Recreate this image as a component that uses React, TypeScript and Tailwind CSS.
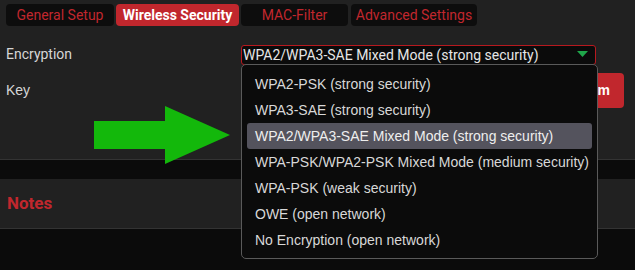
import React from 'react';

const tabs = ['General Setup', 'Wireless Security', 'MAC-Filter', 'Advanced Settings'];

const options = [
  'WPA2-PSK (strong security)',
  'WPA3-SAE (strong security)',
  'WPA2/WPA3-SAE Mixed Mode (strong security)',
  'WPA-PSK/WPA2-PSK Mixed Mode (medium security)',
  'WPA-PSK (weak security)',
  'OWE (open network)',
  'No Encryption (open network)',
];

const App: React.FC = () => {
  const selected = 2;

  return (
    <div className="relative w-[635px] h-[270px] overflow-hidden bg-[#0b0b0b] font-['Roboto',sans-serif]">
      {/* settings panel */}
      <div className="h-[160px] bg-[#212121] border-b border-[#333] pt-[4px] px-[6px]">
        <div className="flex gap-[2px]">
          {tabs.map((t, i) => (
            <div
              key={t}
              className={`h-[22px] rounded-[4px] flex items-center justify-center text-[14px] ${
                i === 1
                  ? 'w-[123px] bg-[#c1272d] text-white font-bold'
                  : 'bg-[#0d0d0d] text-[#c1272d]'
              } ${i === 0 ? 'w-[108px]' : ''} ${i === 2 ? 'w-[107px]' : ''} ${i === 3 ? 'w-[126px] ml-[1px]' : ''}`}
            >
              {t}
            </div>
          ))}
        </div>

        <div className="flex items-center mt-[18px]">
          <div className="w-[235px] text-[14px] text-[#d6d6d6]">Encryption</div>
          <div className="w-[355px] h-[20px] rounded-[3px] border border-[#b7191f] bg-[#0b0b0b] flex items-center justify-between pl-[1px] pr-[7px]">
            <span className="text-[14px] text-[#e6e6e6] leading-none">WPA2/WPA3-SAE Mixed Mode (strong security)</span>
            <svg width="11" height="7" viewBox="0 0 11 7">
              <polygon points="0,0 11,0 5.5,6" fill="#1fa64a" />
            </svg>
          </div>
        </div>

        <div className="flex items-center justify-between mt-[8px] pr-[5px]">
          <div className="text-[14px] text-[#d6d6d6] font-['Liberation_Sans',sans-serif]">Key</div>
          <button className="h-[35px] w-[90px] rounded-[4px] bg-[#c1272d] text-white font-bold text-[14px] text-right pr-[14px] font-['Liberation_Sans',sans-serif]">
            Random
          </button>
        </div>
      </div>

      {/* notes */}
      <div className="mt-[19px] h-[50px] bg-[#212121] border-b border-[#333] flex items-center px-[7px]">
        <span className="text-[#c1272d] font-bold text-[17px]">Notes</span>
      </div>

      {/* green arrow */}
      <svg className="absolute left-[94px] top-[106px]" width="137" height="58" viewBox="0 0 137 58">
        <polygon points="0,15 71,15 71,0 136,29 71,58 71,43 0,43" fill="#13b80b" />
      </svg>

      {/* open dropdown */}
      <div className="absolute left-[241px] top-[64px] w-[357px] h-[195px] bg-[#0b0b0b] border border-[#5a5a5a] rounded-[5px] px-[5px] pt-[6px] font-['Liberation_Sans',sans-serif]">
        {options.map((o, i) => (
          <div
            key={o}
            className={`h-[26px] flex items-center pl-[8px] text-[14px] text-[#d8d8d8] rounded-[3px] ${
              i === selected ? 'bg-[#54535d] text-[#eeeeee]' : ''
            }`}
          >
            {o}
          </div>
        ))}
      </div>
    </div>
  );
};

export default App;
